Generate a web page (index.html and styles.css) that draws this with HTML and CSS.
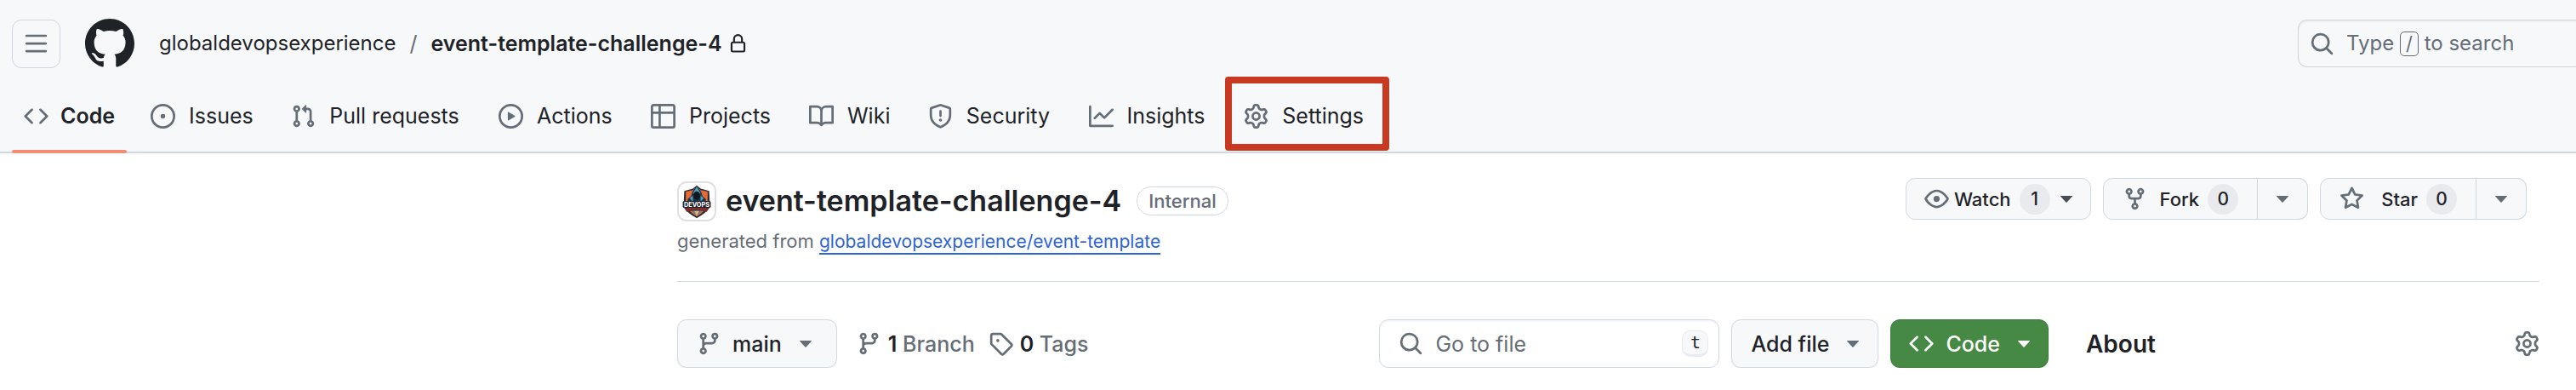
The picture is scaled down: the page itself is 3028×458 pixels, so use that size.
FILE: index.html
```html
<!DOCTYPE html>
<html lang="en">
<head>
<meta charset="utf-8">
<title>globaldevopsexperience/event-template-challenge-4</title>
<link rel="stylesheet" href="styles.css">
</head>
<body>
<svg class="defs" aria-hidden="true">
  <symbol id="i-menu" viewBox="0 0 16 16"><path d="M1 2.75A.75.75 0 0 1 1.75 2h12.5a.75.75 0 0 1 0 1.5H1.75A.75.75 0 0 1 1 2.75Zm0 5A.75.75 0 0 1 1.75 7h12.5a.75.75 0 0 1 0 1.5H1.75A.75.75 0 0 1 1 7.75ZM1.75 12h12.5a.75.75 0 0 1 0 1.5H1.75a.75.75 0 0 1 0-1.5Z"/></symbol>
  <symbol id="i-mark" viewBox="0 0 16 16"><path d="M8 0c4.42 0 8 3.58 8 8a8.013 8.013 0 0 1-5.45 7.59c-.4.08-.55-.17-.55-.38 0-.27.01-1.13.01-2.2 0-.75-.25-1.23-.54-1.48 1.78-.2 3.65-.88 3.65-3.95 0-.88-.31-1.59-.82-2.15.08-.2.36-1.02-.08-2.12 0 0-.67-.22-2.2.82-.64-.18-1.32-.27-2-.27-.68 0-1.36.09-2 .27-1.53-1.03-2.2-.82-2.2-.82-.44 1.1-.16 1.92-.08 2.12-.51.56-.82 1.28-.82 2.15 0 3.06 1.86 3.75 3.64 3.95-.23.2-.44.55-.51 1.07-.46.21-1.61.55-2.33-.66-.15-.24-.6-.83-1.23-.82-.67.01-.27.38.01.53.34.19.73.9.82 1.13.16.45.68 1.31 2.69.94 0 .67.01 1.3.01 1.49 0 .21-.15.45-.55.38A7.995 7.995 0 0 1 0 8c0-4.42 3.58-8 8-8Z"/></symbol>
  <symbol id="i-lock" viewBox="0 0 16 16"><path d="M4 4a4 4 0 0 1 8 0v2h.25c.966 0 1.75.784 1.75 1.75v5.5A1.75 1.75 0 0 1 12.25 15h-8.5A1.75 1.75 0 0 1 2 13.25v-5.5C2 6.784 2.784 6 3.75 6H4Zm8.25 3.5h-8.5a.25.25 0 0 0-.25.25v5.5c0 .138.112.25.25.25h8.5a.25.25 0 0 0 .25-.25v-5.5a.25.25 0 0 0-.25-.25ZM10.5 6V4a2.5 2.5 0 1 0-5 0v2Z"/></symbol>
  <symbol id="i-search" viewBox="0 0 16 16"><path d="M10.68 11.74a6 6 0 0 1-7.922-8.982 6 6 0 0 1 8.982 7.922l3.04 3.04a.749.749 0 0 1-.326 1.275.749.749 0 0 1-.734-.215ZM11.5 7a4.499 4.499 0 1 0-8.997 0A4.499 4.499 0 0 0 11.5 7Z"/></symbol>
  <symbol id="i-code" viewBox="0 0 16 16"><path d="m11.28 3.22 4.25 4.25a.75.75 0 0 1 0 1.06l-4.25 4.25a.749.749 0 0 1-1.275-.326.749.749 0 0 1 .215-.734L13.94 8l-3.72-3.72a.749.749 0 0 1 .326-1.275.749.749 0 0 1 .734.215Zm-6.56 0a.751.751 0 0 1 1.042.018.751.751 0 0 1 .018 1.042L2.06 8l3.72 3.72a.749.749 0 0 1-.326 1.275.749.749 0 0 1-.734-.215L.47 8.53a.75.75 0 0 1 0-1.06Z"/></symbol>
  <symbol id="i-issue" viewBox="0 0 16 16"><path d="M8 9.5a1.5 1.5 0 1 0 0-3 1.5 1.5 0 0 0 0 3Z"/><path d="M8 0a8 8 0 1 1 0 16A8 8 0 0 1 8 0ZM1.5 8a6.5 6.5 0 1 0 13 0 6.5 6.5 0 0 0-13 0Z"/></symbol>
  <symbol id="i-pr" viewBox="0 0 16 16"><path d="M1.5 3.25a2.25 2.25 0 1 1 3 2.122v5.256a2.251 2.251 0 1 1-1.5 0V5.372A2.25 2.25 0 0 1 1.5 3.25Zm5.677-.177L9.573.677A.25.25 0 0 1 10 .854V2.5h1A2.5 2.5 0 0 1 13.5 5v5.628a2.251 2.251 0 1 1-1.5 0V5a1 1 0 0 0-1-1h-1v1.646a.25.25 0 0 1-.427.177L7.177 3.427a.25.25 0 0 1 0-.354ZM3.75 2.5a.75.75 0 1 0 0 1.5.75.75 0 0 0 0-1.5Zm0 9.5a.75.75 0 1 0 0 1.5.75.75 0 0 0 0-1.5Zm8.25.75a.75.75 0 1 0 1.5 0 .75.75 0 0 0-1.5 0Z"/></symbol>
  <symbol id="i-play" viewBox="0 0 16 16"><path d="M8 0a8 8 0 1 1 0 16A8 8 0 0 1 8 0ZM1.5 8a6.5 6.5 0 1 0 13 0 6.5 6.5 0 0 0-13 0Zm4.879-2.773 4.264 2.559a.25.25 0 0 1 0 .428l-4.264 2.559A.25.25 0 0 1 6 10.559V5.442a.25.25 0 0 1 .379-.215Z"/></symbol>
  <symbol id="i-table" viewBox="0 0 16 16"><path d="M0 1.75C0 .784.784 0 1.75 0h12.5C15.216 0 16 .784 16 1.75v12.5A1.75 1.75 0 0 1 14.25 16H1.75A1.75 1.75 0 0 1 0 14.25ZM6.5 6.5v8h7.75a.25.25 0 0 0 .25-.25V6.5Zm8-1.5V1.75a.25.25 0 0 0-.25-.25H6.5V5Zm-13 1.5v7.75c0 .138.112.25.25.25H5v-8ZM5 5V1.5H1.75a.25.25 0 0 0-.25.25V5Z"/></symbol>
  <symbol id="i-book" viewBox="0 0 16 16"><path d="M0 1.75A.75.75 0 0 1 .75 1h4.253c1.227 0 2.317.59 3 1.501A3.743 3.743 0 0 1 11.006 1h4.245a.75.75 0 0 1 .75.75v10.5a.75.75 0 0 1-.75.75h-4.507a2.25 2.25 0 0 0-1.591.659l-.622.621a.75.75 0 0 1-1.06 0l-.622-.621A2.25 2.25 0 0 0 5.258 13H.75a.75.75 0 0 1-.75-.75Zm7.251 10.324.004-5.073-.002-2.253A2.25 2.25 0 0 0 5.003 2.5H1.5v9h3.757a3.75 3.75 0 0 1 1.994.574ZM8.755 4.75l-.004 7.322a3.752 3.752 0 0 1 1.992-.572H14.5v-9h-3.495a2.25 2.25 0 0 0-2.25 2.25Z"/></symbol>
  <symbol id="i-shield" viewBox="0 0 16 16"><path d="M7.467.133a1.748 1.748 0 0 1 1.066 0l5.25 1.68A1.75 1.75 0 0 1 15 3.48V7c0 1.566-.32 3.182-1.303 4.682-.983 1.498-2.585 2.813-5.032 3.855a1.697 1.697 0 0 1-1.33 0c-2.447-1.042-4.049-2.357-5.032-3.855C1.32 10.182 1 8.566 1 7V3.48a1.75 1.75 0 0 1 1.217-1.667Zm.61 1.429a.25.25 0 0 0-.153 0l-5.25 1.68a.25.25 0 0 0-.174.238V7c0 1.358.275 2.666 1.057 3.86.784 1.194 2.121 2.34 4.366 3.297a.196.196 0 0 0 .154 0c2.245-.956 3.582-2.104 4.366-3.298C13.225 9.666 13.5 8.36 13.5 7V3.48a.251.251 0 0 0-.174-.237l-5.25-1.68ZM8.75 4.75v3a.75.75 0 0 1-1.5 0v-3a.75.75 0 0 1 1.5 0ZM9 10.5a1 1 0 1 1-2 0 1 1 0 0 1 2 0Z"/></symbol>
  <symbol id="i-graph" viewBox="0 0 16 16"><path d="M1.5 1.75V13.5h13.75a.75.75 0 0 1 0 1.5H.75a.75.75 0 0 1-.75-.75V1.75a.75.75 0 0 1 1.5 0Zm14.28 2.53-5.25 5.25a.75.75 0 0 1-1.06 0L7 7.06 4.28 9.78a.751.751 0 0 1-1.042-.018.751.751 0 0 1-.018-1.042l3.25-3.25a.75.75 0 0 1 1.06 0L10 7.94l4.72-4.72a.751.751 0 0 1 1.042.018.751.751 0 0 1 .018 1.042Z"/></symbol>
  <symbol id="i-gear" viewBox="0 0 16 16"><path d="M8 0a8.2 8.2 0 0 1 .701.031C9.444.095 9.99.645 10.16 1.29l.288 1.107c.018.066.079.158.212.224.231.114.454.243.668.386.123.082.233.09.299.071l1.103-.303c.644-.176 1.392.021 1.82.63.27.385.506.792.704 1.218.315.675.111 1.422-.364 1.891l-.814.806c-.049.048-.098.147-.088.294.016.257.016.515 0 .772-.01.147.038.246.088.294l.814.806c.475.469.679 1.216.364 1.891a7.977 7.977 0 0 1-.704 1.217c-.428.61-1.176.807-1.82.63l-1.102-.302c-.067-.019-.177-.011-.3.071a5.909 5.909 0 0 1-.668.386c-.133.066-.194.158-.211.224l-.29 1.106c-.168.646-.715 1.196-1.458 1.26a8.006 8.006 0 0 1-1.402 0c-.743-.064-1.289-.614-1.458-1.26l-.289-1.106c-.018-.066-.079-.158-.212-.224a5.738 5.738 0 0 1-.668-.386c-.123-.082-.233-.09-.299-.071l-1.103.303c-.644.176-1.392-.021-1.82-.63a8.12 8.12 0 0 1-.704-1.218c-.315-.675-.111-1.422.363-1.891l.815-.806c.05-.048.098-.147.088-.294a6.214 6.214 0 0 1 0-.772c.01-.147-.038-.246-.088-.294l-.815-.806C.635 6.045.431 5.298.746 4.623a7.92 7.92 0 0 1 .704-1.217c.428-.61 1.176-.807 1.82-.63l1.102.302c.067.019.177.011.3-.071.214-.143.437-.272.668-.386.133-.066.194-.158.211-.224l.29-1.106C6.009.645 6.556.095 7.299.03 7.53.01 7.764 0 8 0Zm-.571 1.525c-.036.003-.108.036-.137.146l-.289 1.105c-.147.561-.549.967-.998 1.189-.173.086-.34.183-.5.29-.417.278-.97.423-1.529.27l-1.103-.303c-.109-.03-.175.016-.195.045-.22.312-.412.644-.573.99-.014.031-.021.11.059.19l.815.806c.411.406.562.957.53 1.456a4.709 4.709 0 0 0 0 .582c.032.499-.119 1.05-.53 1.456l-.815.806c-.081.08-.073.159-.059.19.162.346.353.677.573.989.02.03.085.076.195.046l1.102-.303c.56-.153 1.113-.008 1.53.27.161.107.328.204.501.29.447.222.85.629.997 1.189l.289 1.105c.029.109.101.143.137.146a6.6 6.6 0 0 0 1.142 0c.036-.003.108-.036.137-.146l.289-1.105c.147-.561.549-.967.998-1.189.173-.086.34-.183.5-.29.417-.278.97-.423 1.529-.27l1.103.303c.109.029.175-.016.195-.045.22-.313.411-.644.573-.99.014-.031.021-.11-.059-.19l-.815-.806c-.411-.406-.562-.957-.53-1.456a4.709 4.709 0 0 0 0-.582c-.032-.499.119-1.05.53-1.456l.815-.806c.081-.08.073-.159.059-.19a6.464 6.464 0 0 0-.573-.989c-.02-.03-.085-.076-.195-.046l-1.102.303c-.56.153-1.113.008-1.53-.27a4.44 4.44 0 0 0-.501-.29c-.447-.222-.85-.629-.997-1.189l-.289-1.105c-.029-.11-.101-.143-.137-.146a6.6 6.6 0 0 0-1.142 0ZM11 8a3 3 0 1 1-6 0 3 3 0 0 1 6 0ZM9.5 8a1.5 1.5 0 1 0-3.001.001A1.5 1.5 0 0 0 9.5 8Z"/></symbol>
  <symbol id="i-eye" viewBox="0 0 16 16"><path d="M8 2c1.981 0 3.671.992 4.933 2.078 1.27 1.091 2.187 2.345 2.637 3.023a1.62 1.62 0 0 1 0 1.798c-.45.678-1.367 1.932-2.637 3.023C11.67 13.008 9.981 14 8 14c-1.981 0-3.671-.992-4.933-2.078C1.797 10.83.88 9.576.43 8.898a1.62 1.62 0 0 1 0-1.798c.45-.677 1.367-1.931 2.637-3.022C4.33 2.992 6.019 2 8 2ZM1.679 7.932a.12.12 0 0 0 0 .136c.411.622 1.241 1.75 2.366 2.717C5.176 11.758 6.527 12.5 8 12.5c1.473 0 2.825-.742 3.955-1.715 1.124-.967 1.954-2.096 2.366-2.717a.12.12 0 0 0 0-.136c-.412-.621-1.242-1.75-2.366-2.717C10.824 4.242 9.473 3.5 8 3.5c-1.473 0-2.825.742-3.955 1.715-1.124.967-1.954 2.096-2.366 2.717ZM8 10a2 2 0 1 1-.001-3.999A2 2 0 0 1 8 10Z"/></symbol>
  <symbol id="i-fork" viewBox="0 0 16 16"><path d="M5 5.372v.878c0 .414.336.75.75.75h4.5a.75.75 0 0 0 .75-.75v-.878a2.25 2.25 0 1 1 1.5 0v.878a2.25 2.25 0 0 1-2.25 2.25h-1.5v2.128a2.251 2.251 0 1 1-1.5 0V8.5h-1.5A2.25 2.25 0 0 1 3.5 6.25v-.878a2.25 2.25 0 1 1 1.5 0ZM5 3.25a.75.75 0 1 0-1.5 0 .75.75 0 0 0 1.5 0Zm6.75.75a.75.75 0 1 0 0-1.5.75.75 0 0 0 0 1.5Zm-3 8.75a.75.75 0 1 0-1.5 0 .75.75 0 0 0 1.5 0Z"/></symbol>
  <symbol id="i-star" viewBox="0 0 16 16"><path d="M8 .25a.75.75 0 0 1 .673.418l1.882 3.815 4.21.612a.75.75 0 0 1 .416 1.279l-3.046 2.97.719 4.192a.751.751 0 0 1-1.088.791L8 12.347l-3.766 1.98a.75.75 0 0 1-1.088-.79l.72-4.194L.818 6.374a.75.75 0 0 1 .416-1.28l4.21-.611L7.327.668A.75.75 0 0 1 8 .25Zm0 2.445L6.615 5.5a.75.75 0 0 1-.564.41l-3.097.45 2.24 2.184a.75.75 0 0 1 .216.664l-.528 3.084 2.769-1.456a.75.75 0 0 1 .698 0l2.77 1.456-.53-3.084a.75.75 0 0 1 .216-.664l2.24-2.183-3.096-.45a.75.75 0 0 1-.564-.41L8 2.694Z"/></symbol>
  <symbol id="i-branch" viewBox="0 0 16 16"><path d="M9.5 3.25a2.25 2.25 0 1 1 3 2.122V6A2.5 2.5 0 0 1 10 8.5H6a1 1 0 0 0-1 1v1.128a2.251 2.251 0 1 1-1.5 0V5.372a2.25 2.25 0 1 1 1.5 0v1.836A2.493 2.493 0 0 1 6 7h4a1 1 0 0 0 1-1v-.628A2.25 2.25 0 0 1 9.5 3.25Zm-6 0a.75.75 0 1 0 1.5 0 .75.75 0 0 0-1.5 0Zm8.25-.75a.75.75 0 1 0 0 1.5.75.75 0 0 0 0-1.5ZM4.25 12a.75.75 0 1 0 0 1.5.75.75 0 0 0 0-1.5Z"/></symbol>
  <symbol id="i-tag" viewBox="0 0 16 16"><path d="M1 7.775V2.75C1 1.784 1.784 1 2.75 1h5.025c.464 0 .91.184 1.238.513l6.25 6.25a1.75 1.75 0 0 1 0 2.474l-5.026 5.026a1.75 1.75 0 0 1-2.474 0l-6.25-6.25A1.752 1.752 0 0 1 1 7.775Zm1.5 0c0 .066.026.13.073.177l6.25 6.25a.25.25 0 0 0 .354 0l5.025-5.025a.25.25 0 0 0 0-.354l-6.25-6.25a.25.25 0 0 0-.177-.073H2.75a.25.25 0 0 0-.25.25ZM6 5a1 1 0 1 1 0 2 1 1 0 0 1 0-2Z"/></symbol>
  <symbol id="i-caret" viewBox="0 0 14 8"><path d="M.6 0h12.8q1 0 .4.7L7.6 7.5q-.6.6-1.2 0L.2.7Q-.4 0 .6 0Z"/></symbol>
</svg>

<header class="site-header">
  <div class="topbar">
    <button class="menu-button" aria-label="Open menu"><svg class="icon"><use href="#i-menu"/></svg></button>
    <a class="home" href="#" aria-label="Homepage"><svg class="mark"><use href="#i-mark"/></svg></a>
    <nav class="crumbs" aria-label="Breadcrumb">
      <a class="crumb-owner" href="#">globaldevopsexperience</a>
      <span class="crumb-sep">/</span>
      <a class="crumb-repo" href="#">event-template-challenge-4</a>
      <svg class="lock"><use href="#i-lock"/></svg>
    </nav>
    <button class="global-search"><svg class="icon"><use href="#i-search"/></svg><span class="search-hint">Type <kbd class="slash">/</kbd> to search</span></button>
  </div>
  <nav class="tabs" aria-label="Repository">
    <a class="tab tab-current" href="#" aria-current="page"><svg class="icon"><use href="#i-code"/></svg><span class="tab-label" data-label="Code">Code</span></a>
    <a class="tab" href="#"><svg class="icon"><use href="#i-issue"/></svg><span class="tab-label" data-label="Issues">Issues</span></a>
    <a class="tab" href="#"><svg class="icon"><use href="#i-pr"/></svg><span class="tab-label" data-label="Pull requests">Pull requests</span></a>
    <a class="tab" href="#"><svg class="icon"><use href="#i-play"/></svg><span class="tab-label" data-label="Actions">Actions</span></a>
    <a class="tab" href="#"><svg class="icon"><use href="#i-table"/></svg><span class="tab-label" data-label="Projects">Projects</span></a>
    <a class="tab" href="#"><svg class="icon"><use href="#i-book"/></svg><span class="tab-label" data-label="Wiki">Wiki</span></a>
    <a class="tab" href="#"><svg class="icon"><use href="#i-shield"/></svg><span class="tab-label" data-label="Security">Security</span></a>
    <a class="tab" href="#"><svg class="icon"><use href="#i-graph"/></svg><span class="tab-label" data-label="Insights">Insights</span></a>
    <a class="tab tab-marked" href="#"><svg class="icon"><use href="#i-gear"/></svg><span class="tab-label" data-label="Settings">Settings</span></a>
  </nav>
</header>

<main class="repo">
  <div class="repo-head">
    <div class="repo-title">
      <div class="title-row">
        <span class="avatar">
          <svg viewBox="0 0 46 47" role="img" aria-label="DevOps shield">
            <path d="M23 3l5 4 11 3 1 20q-4 8-17 15Q10 38 6 30L7 10l11-3z" fill="#2b2d37"/>
            <path d="M9 11l9-2 5-4 5 4 9 2v18q-4 8-14 14Q13 37 9 29z" fill="#e96a32"/>
            <path d="M23 5q6 4 7 11l5 5-2 8H13l-2-8 5-5q1-7 7-11z" fill="#21364a"/>
            <path d="M18 13l5-8 5 8-2 2-3-5-3 5zM14 19l4-3v8zM32 19l-4-3v8z" fill="#47a6bd"/>
            <path d="M19 13q4-5 8 0v6l-4 3-4-3z" fill="#101722"/>
            <path d="M15 34h16l-8 8z" fill="#3187a6"/>
            <path d="M20 36h6l-3 6z" fill="#f0b16b"/>
            <path d="M7 32h32l-3 5-13-2-13 2z" fill="#7c2b2d"/>
            <rect x="5" y="23" width="36" height="9" rx="2" fill="#20222c"/>
            <text class="avatar-text" x="23" y="31" text-anchor="middle">DEVOPS</text>
          </svg>
        </span>
        <h1>event-template-challenge-4</h1>
        <span class="visibility">Internal</span>
      </div>
      <p class="origin">generated from <a href="#">globaldevopsexperience/event-template</a></p>
    </div>
    <div class="social">
      <button class="btn watch"><svg class="icon"><use href="#i-eye"/></svg>Watch<span class="count">1</span><svg class="caret"><use href="#i-caret"/></svg></button>
      <div class="split">
        <button class="btn split-main"><svg class="icon"><use href="#i-fork"/></svg>Fork<span class="count">0</span></button>
        <button class="btn split-more" aria-label="More fork options"><svg class="caret"><use href="#i-caret"/></svg></button>
      </div>
      <div class="split">
        <button class="btn split-main star"><svg class="icon"><use href="#i-star"/></svg>Star<span class="count">0</span></button>
        <button class="btn split-more" aria-label="More star options"><svg class="caret"><use href="#i-caret"/></svg></button>
      </div>
    </div>
  </div>
  <div class="repo-body">
    <div class="file-bar">
      <button class="btn tall branch"><svg class="icon"><use href="#i-branch"/></svg><span>main</span><svg class="caret"><use href="#i-caret"/></svg></button>
      <div class="refs">
        <a href="#"><svg class="icon"><use href="#i-branch"/></svg><span><strong>1</strong> Branch</span></a>
        <a href="#"><svg class="icon"><use href="#i-tag"/></svg><span><strong>0</strong> Tags</span></a>
      </div>
      <div class="file-actions">
        <label class="file-search"><svg class="icon"><use href="#i-search"/></svg><input type="text" placeholder="Go to file" aria-label="Go to file"><kbd class="key">t</kbd></label>
        <button class="btn tall add">Add file<svg class="caret"><use href="#i-caret"/></svg></button>
        <button class="btn tall primary"><svg class="icon"><use href="#i-code"/></svg>Code<svg class="caret"><use href="#i-caret"/></svg></button>
      </div>
    </div>
    <aside class="about">
      <h2>About</h2>
      <button class="gear" aria-label="Edit repository details"><svg class="icon"><use href="#i-gear"/></svg></button>
    </aside>
  </div>
</main>
</body>
</html>
```
FILE: styles.css
```css
* { box-sizing: border-box; }

body {
  margin: 0;
  overflow-x: hidden;
  background: #fff;
  color: #1f2328;
  font: 25px/36px Inter, "Liberation Sans", sans-serif;
}

a { color: inherit; text-decoration: none; }
button { margin: 0; font: inherit; color: inherit; cursor: pointer; }
h1, h2, p { margin: 0; }

.defs { position: absolute; width: 0; height: 0; }
.icon { width: 29px; height: 29px; flex: none; fill: #656d76; }
.caret { width: 14px; height: 8px; flex: none; fill: #656d76; }

/* Header */
.site-header { background: #f6f8fa; border-bottom: 2px solid #d1d9e0; }
.topbar { display: flex; align-items: center; padding: 22px 0 14px 14px; }
.menu-button {
  display: grid;
  place-items: center;
  width: 57px;
  height: 57px;
  padding: 0;
  border: 1px solid #d1d5e0;
  border-radius: 11px;
  background: none;
}
.home { display: flex; margin-left: 29px; }
.mark { width: 58px; height: 58px; fill: #1f2328; }
.crumbs { display: flex; align-items: center; margin-left: 29px; }
.crumb-owner { font-size: 24px; }
.crumb-sep { margin: 0 16px; color: #656d76; }
.crumb-repo { font-weight: 600; }
.lock { width: 23px; height: 23px; margin-left: 7px; fill: #1f2328; }
.global-search {
  display: flex;
  align-items: center;
  gap: 14px;
  width: 327px;
  height: 56px;
  margin-left: auto;
  padding: 0 0 0 13px;
  border: 1px solid #d1d5da;
  border-right: 0;
  border-radius: 11px 0 0 11px;
  background: none;
  color: #656d76;
  box-shadow: inset 0 2px 2px rgba(31, 35, 40, 0.04);
}
.search-hint { font-size: 24px; white-space: nowrap; }
.slash {
  display: inline-block;
  width: 22px;
  border: 1px solid #656d76;
  border-radius: 5px;
  font: 22px/27px Inter, sans-serif;
  text-align: center;
}

.tabs { display: flex; gap: 14px; padding-left: 14px; }
.tab {
  position: relative;
  display: flex;
  align-items: center;
  gap: 16px;
  height: 84px;
  padding: 0 14px;
}
.tab-label::after {
  content: attr(data-label);
  display: block;
  height: 0;
  overflow: hidden;
  visibility: hidden;
  font-weight: 600;
}
.tab-current { gap: 14px; font-weight: 600; }
.tab-current::after {
  content: "";
  position: absolute;
  right: 0;
  bottom: -2px;
  left: 0;
  height: 4px;
  border-radius: 2px;
  background: #f28f73;
}
.tab-marked::after {
  content: "";
  position: absolute;
  inset: -4px -13px 1px -8px;
  border: 8px solid #c93820;
  border-radius: 4px;
}

/* Repository heading */
.repo { padding: 29px 43px 0 796px; }
.repo-head { display: flex; justify-content: space-between; padding-bottom: 29px; border-bottom: 1px solid #d1d9e0; }
.title-row { display: flex; align-items: center; height: 54px; }
.avatar {
  width: 46px;
  height: 47px;
  border: 2px solid #e0e0e0;
  border-radius: 11px;
  overflow: hidden;
}
.avatar svg { display: block; width: 100%; height: 100%; }
.avatar-text { fill: #fff; font: 700 8px Inter, sans-serif; }
h1 { margin-left: 11px; font-size: 34px; font-weight: 600; line-height: 52px; }
.visibility {
  margin-left: 18px;
  padding: 0 13px;
  border: 1px solid #d1d9e0;
  border-radius: 18px;
  color: #656d76;
  font-size: 22px;
  font-weight: 500;
  line-height: 32px;
}
.origin { margin-top: 3px; color: #656d76; font-size: 22px; line-height: 34px; }
.origin a { color: #2c63d6; font-size: 21px; text-decoration: underline 2px; text-underline-offset: 6px; }

/* Buttons */
.social { display: flex; gap: 14px; padding-right: 15px; }
.btn {
  display: flex;
  align-items: center;
  height: 49px;
  padding: 0 22px;
  border: 1px solid #d1d9e0;
  border-radius: 11px;
  background: #f6f8fa;
  font-size: 22px;
  font-weight: 500;
}
.count {
  width: 36px;
  height: 36px;
  margin-left: 10px;
  border-radius: 18px;
  background: #e9eaed;
  font-size: 21px;
  line-height: 36px;
  text-align: center;
}
.watch { padding: 0 21px; }
.watch .icon { margin-right: 6px; }
.watch .caret { margin-left: 12px; fill: #4a4f55; }
.split { display: flex; }
.split-main { border-radius: 11px 0 0 11px; }
.split-main .icon { margin-right: 15px; }
.split-main.star .icon { margin-right: 20px; }
.split-more { border-left: 0; border-radius: 0 11px 11px 0; }

.repo-body { display: grid; grid-template-columns: 1fr 533px; column-gap: 44px; padding-top: 44px; }
.file-bar { display: flex; align-items: center; }
.tall { height: 57px; font-size: 25px; box-shadow: 0 2px 2px rgba(31, 35, 40, 0.05); }
.branch { padding-right: 29px; }
.branch .icon { margin-right: 13px; }
.tall .caret { margin-left: 21px; }
.refs { display: flex; gap: 16px; margin-left: 23px; color: #656d76; font-weight: 500; }
.refs a { display: flex; align-items: center; gap: 8px; }
.refs strong { color: #1f2328; font-weight: 600; }
.file-actions { display: flex; gap: 14px; margin-left: auto; }
.file-search {
  display: flex;
  align-items: center;
  gap: 14px;
  width: 400px;
  height: 57px;
  padding: 0 12px 0 22px;
  border: 1px solid #d1d9e0;
  border-radius: 11px;
  box-shadow: inset 0 2px 2px rgba(31, 35, 40, 0.04);
}
.file-search input { flex: 1; min-width: 0; padding: 0; border: 0; outline: 0; background: none; font: inherit; }
.file-search input::placeholder { color: #656d76; opacity: 1; }
.key {
  width: 31px;
  height: 31px;
  border: 1px solid #e9ebef;
  border-bottom-width: 3px;
  border-radius: 10px;
  background: #f6f8fa;
  font: 20px/26px "DejaVu Sans Mono", monospace;
  text-align: center;
}
.primary { padding: 0 21px; border-color: #3c7a3d; background: #458944; color: #fff; }
.primary .icon { margin-right: 14px; fill: #fff; }
.primary .caret { fill: #fff; }

.about { display: flex; align-items: center; justify-content: space-between; }
h2 { font-size: 28px; font-weight: 600; }
.gear { display: flex; padding: 0; border: 0; background: none; }
```
